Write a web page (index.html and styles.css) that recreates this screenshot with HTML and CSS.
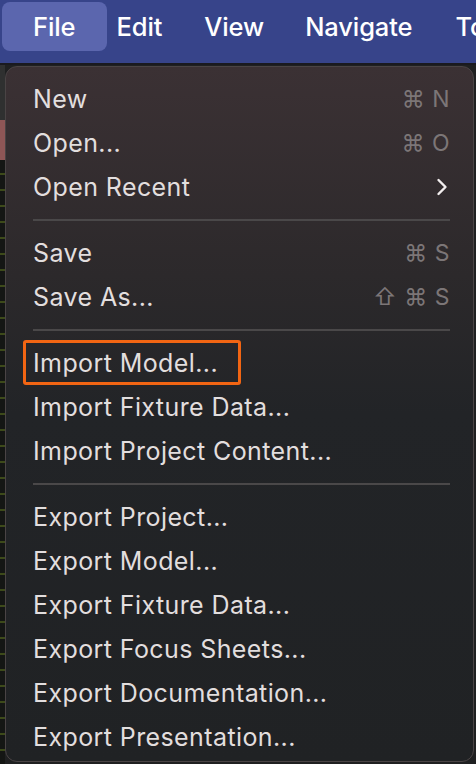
FILE: index.html
```html
<!DOCTYPE html>
<html>
<head>
<meta charset="utf-8">
<link rel="stylesheet" href="styles.css">
</head>
<body>
<div class="menubar">
  <span class="mb-item active">File</span>
  <span class="mb-item">Edit</span>
  <span class="mb-item">View</span>
  <span class="mb-item">Navigate</span>
  <span class="mb-item">Tools</span>
</div>
<div class="app">
  <div class="side">
    <div class="side-top"></div>
    <div class="side-red"></div>
    <div class="side-ticks"></div>
  </div>
  <div class="menu">
    <div class="row"><span>New</span><span class="sc">⌘ N</span></div>
    <div class="row"><span>Open...</span><span class="sc">⌘ O</span></div>
    <div class="row"><span>Open Recent</span><svg class="chev" width="12" height="18" viewBox="0 0 12 18"><path d="M2.5 2 L9.5 9 L2.5 16" fill="none" stroke="#f2eeee" stroke-width="2.4" stroke-linecap="round" stroke-linejoin="round"/></svg></div>
    <div class="sep"></div>
    <div class="row"><span>Save</span><span class="sc">⌘ S</span></div>
    <div class="row"><span>Save As...</span><span class="sc">⇧ ⌘ S</span></div>
    <div class="sep"></div>
    <div class="row"><span class="hl">Import Model...</span></div>
    <div class="row"><span>Import Fixture Data...</span></div>
    <div class="row"><span>Import Project Content...</span></div>
    <div class="sep"></div>
    <div class="row"><span>Export Project...</span></div>
    <div class="row"><span>Export Model...</span></div>
    <div class="row"><span>Export Fixture Data...</span></div>
    <div class="row"><span>Export Focus Sheets...</span></div>
    <div class="row"><span>Export Documentation...</span></div>
    <div class="row"><span>Export Presentation...</span></div>
  </div>
</div>
</body>
</html>
```

FILE: styles.css
```css
html, body {
  margin: 0;
  padding: 0;
}
body {
  width: 476px;
  height: 764px;
  overflow: hidden;
  background: #1f2021;
  font-family: "Inter", "Liberation Sans", sans-serif;
}
.menubar {
  background: #37448a;
  border-bottom: 2px solid #1a1a1f;
  display: flex;
  align-items: flex-start;
  padding-top: 2px;
  box-sizing: border-box;
  height: 65px;
  overflow: hidden;
  white-space: nowrap;
}
.mb-item {
  color: #ffffff;
  font-size: 25.5px;
  font-weight: 500;
  height: 49px;
  line-height: 50px;
  border-radius: 8px;
  letter-spacing: -0.1px;
  flex-shrink: 0;
}
.mb-item:first-child {
  margin-left: 2px;
  padding: 0 32px 0 31px;
}
.mb-item.active {
  background: #5b66ae;
}
.mb-item:nth-child(2) { padding: 0 20px 0 9px; }
.mb-item:nth-child(3) { padding: 0 22px 0 22px; }
.mb-item:nth-child(4) { padding: 0 22px 0 19px; }
.mb-item:nth-child(5) { padding: 0 0 0 21px; }
.app {
  position: relative;
  height: 699px;
  display: flex;
}
.side {
  width: 5px;
  display: flex;
  flex-direction: column;
}
.side-top {
  height: 55px;
  background: #2f3030;
}
.side-red {
  height: 40px;
  background: #8e5656;
}
.side-ticks {
  flex: 1;
  background: repeating-linear-gradient(to bottom, #141614 0, #141614 13px, #3d4a1a 13px, #3d4a1a 15px, #141614 15px, #141614 16px);
}
.menu {
  position: absolute;
  left: 5px;
  top: 1px;
  width: 469px;
  height: 696px;
  box-sizing: border-box;
  border-radius: 12px;
  border: 1px solid #4a4445;
  background: linear-gradient(to bottom, #3b3134 0%, #2c292b 30%, #222427 50%, #202224 100%);
  padding: 10px 23px 0 27px;
  color: #e2dede;
  font-size: 25px;
  letter-spacing: 0.4px;
}
.row {
  height: 44px;
  display: flex;
  align-items: center;
  justify-content: space-between;
}
.sc {
  color: #7c7677;
  font-size: 23px;
  letter-spacing: 0.5px;
}
.chev {
  margin-right: 2px;
}
.sep {
  height: 22px;
  display: flex;
  align-items: center;
}
.sep::before {
  content: "";
  display: block;
  width: 100%;
  height: 2px;
  background: #4a4849;
}
.hl {
  position: relative;
}
.hl::after {
  content: "";
  position: absolute;
  left: -10px;
  top: -8px;
  right: -23px;
  bottom: -7px;
  border: 3px solid #f26513;
  border-radius: 3px;
}
```
